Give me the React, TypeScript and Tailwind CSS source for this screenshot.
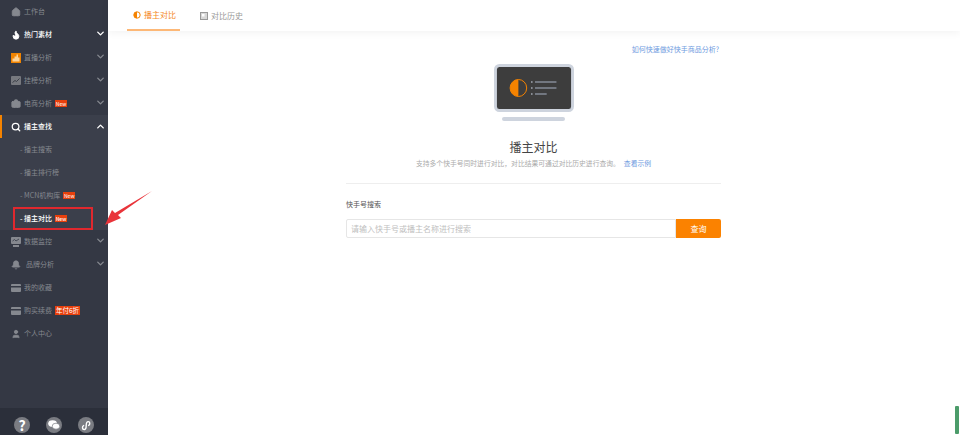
import { ChevronDown, ChevronUp, Search, Home, Flame, Briefcase, Bell, User } from 'lucide-react'
import type { ReactNode } from 'react'

const FONT = '"Noto Sans CJK SC", "Liberation Sans", sans-serif'

function NewBadge() {
  return <span className="ml-[3px] inline-flex h-[7px] w-[12px] items-center justify-center bg-[#e8400c] text-[5px] leading-none text-white">New</span>
}

function Row({ icon, label, chevron, tail, white, labelClass }: {
  icon: ReactNode
  label: string
  chevron?: boolean
  tail?: ReactNode
  white?: boolean
  labelClass?: string
}) {
  return (
    <div className={`flex h-[23px] items-center pl-[11px] pr-[2px] text-[7px] ${white ? 'font-medium text-white' : 'text-[#85888f]'}`}>
      <span className="mr-[3px] flex w-[10px] justify-center">{icon}</span>
      <span className={labelClass}>{label}</span>
      {tail}
      {chevron && <ChevronDown size={11} strokeWidth={3} className={`mb-[2px] ml-auto ${white ? 'text-white' : 'text-[#85888f]'}`} />}
    </div>
  )
}

function SubRow({ label, tail, active }: { label: string; tail?: ReactNode; active?: boolean }) {
  return (
    <div className={`flex h-[23px] items-center pl-[20px] text-[7px] ${active ? 'font-medium text-white' : 'text-[#85888f]'}`}>
      <span className="w-[4px]">-</span>{label}{tail}
    </div>
  )
}

// small grey card glyph used by 我的收藏 / 购买续费
function CardIcon() {
  return (
    <svg width="10" height="8" viewBox="0 0 10 8">
      <rect width="10" height="8" rx="1" fill="#85888f" />
      <rect y="2" width="10" height="1.5" fill="#343844" />
    </svg>
  )
}

function LiveIcon() {
  return (
    <svg width="10" height="10" viewBox="0 0 10 10">
      <rect width="10" height="10" fill="#f08300" />
      <path d="M1.5 8.5V5.5h2V3.5h2V1.5h1.5v3h1.5v4z" fill="#fcd49a" />
    </svg>
  )
}

function TrendIcon() {
  return (
    <svg width="10" height="9" viewBox="0 0 10 9">
      <rect width="10" height="9" rx="1" fill="#77797f" />
      <path d="M1.5 6.5 4 4.5l1.5 1L8.5 2.5" fill="none" stroke="#3c4049" />
    </svg>
  )
}

function MonitorIcon() {
  return (
    <svg width="10" height="10" viewBox="0 0 10 10">
      <rect width="10" height="7" rx="1" fill="#85888f" />
      <path d="M1.5 4 3.5 2.5l1.5 1.5L8 2" fill="none" stroke="#343844" strokeWidth=".8" />
      <rect x="2" y="8" width="6" height="2" fill="#85888f" />
    </svg>
  )
}

function WechatIcon() {
  return (
    <svg width="12" height="10" viewBox="0 0 12 10">
      <ellipse cx="4.6" cy="3.6" rx="4.4" ry="3.4" fill="#fff" />
      <ellipse cx="8" cy="6.2" rx="3.8" ry="3" fill="#fff" stroke="#7a7c82" strokeWidth=".7" />
    </svg>
  )
}

function LoopIcon() {
  return (
    <svg width="10" height="11" viewBox="0 0 10 11" fill="none" stroke="#fff" strokeWidth="1.4" strokeLinecap="round">
      <path d="M2.6 5.6C1 6.4 1 9.6 3.2 9.6c1.8 0 2-1.6 2-4s.4-4 2-4c2 0 2 2.8.5 3.8" />
    </svg>
  )
}

export default function App() {
  return (
    <div className="flex h-[435px] w-[960px] overflow-hidden bg-white" style={{ fontFamily: FONT }}>
      <aside className="relative flex w-[108px] shrink-0 flex-col bg-[#343844]">
        <div className="flex-1">
          <Row icon={<Home size={10} fill="#85888f" className="text-[#85888f]" />} label="工作台" />
          <Row white icon={<Flame size={10} fill="#fff" />} label="热门素材" chevron />
          <Row icon={<LiveIcon />} label="直播分析" chevron />
          <Row icon={<TrendIcon />} label="挂榜分析" chevron />
          <Row icon={<Briefcase size={10} fill="#85888f" className="text-[#85888f]" />} label="电商分析" chevron tail={<NewBadge />} />
          <div className="bg-[#3b3f4b]">
            <div className="relative">
              <span className="absolute left-0 top-0 h-[23px] w-[2px] bg-[#f58300]" />
              <div className="flex h-[23px] items-center pl-[11px] pr-[2px] text-[7px] font-medium text-white">
                <span className="mr-[3px] flex w-[10px] justify-center"><Search size={10} strokeWidth={3} /></span>
                <span>播主查找</span>
                <ChevronUp size={11} strokeWidth={3} className="ml-auto" />
              </div>
            </div>
            <SubRow label="播主搜索" />
            <SubRow label="播主排行榜" />
            <SubRow label="MCN机构库" tail={<NewBadge />} />
            <div className="ml-[13px] mr-[15px] h-[23px] border-2 border-[#e0282e]">
              <div className="-ml-[15px] -mt-[2px]"><SubRow active label="播主对比" tail={<NewBadge />} /></div>
            </div>
          </div>
          <Row icon={<MonitorIcon />} label="数据监控" chevron />
          <Row icon={<Bell size={10} fill="#85888f" className="text-[#85888f]" />} label="品牌分析" chevron labelClass="ml-[2px]" />
          <Row icon={<CardIcon />} label="我的收藏" />
          <Row
            icon={<CardIcon />}
            label="购买续费"
            tail={<span className="ml-[3px] bg-[#e8400c] px-[1px] text-[6.5px] leading-[9px] text-white">年付6折</span>}
          />
          <Row icon={<User size={10} fill="#85888f" className="text-[#85888f]" />} label="个人中心" />
        </div>
        <div className="flex h-[27px] justify-between bg-[#2b2f3a] px-[14px] pt-[9px]">
          <span className="flex h-[16px] w-[16px] items-center justify-center rounded-full bg-[#7a7c82] text-[14px] font-bold leading-none text-white">?</span>
          <span className="flex h-[16px] w-[16px] items-center justify-center rounded-full bg-[#7a7c82]"><WechatIcon /></span>
          <span className="flex h-[16px] w-[16px] items-center justify-center rounded-full bg-[#7a7c82]"><LoopIcon /></span>
        </div>
      </aside>

      <main className="relative flex-1 bg-white">
        <div className="flex h-[31px] items-stretch pl-[19px] shadow-[0_2px_8px_rgba(0,0,0,0.05)]">
          <div className="flex w-[53px] items-center justify-center gap-[3px] border-b-2 border-[#fdb877] pl-[2px] text-[8px] text-[#f58a1f]">
            <svg width="8" height="8" viewBox="0 0 8 8"><circle cx="4" cy="4" r="3.2" fill="none" stroke="#f58300" /><path d="M4 .8a3.2 3.2 0 0 0 0 6.4z" fill="#f58300" /></svg>
            播主对比
          </div>
          <div className="ml-[20px] flex items-center gap-[3px] text-[8px] text-[#999]">
            <svg width="8" height="8" viewBox="0 0 8 8"><rect x=".5" y=".5" width="7" height="7" fill="#d8d8d8" stroke="#999" /><rect x="2" y="2" width="2.5" height="2.5" fill="#fff" /></svg>
            对比历史
          </div>
        </div>

        <div className="flex w-[613px] justify-end pt-[13px] text-[7px] leading-[11px] text-[#6f9be0]">
          <span className="mr-[2px]">如何快速做好快手商品分析?</span>
        </div>

        <div className="ml-[238px] flex w-[375px] flex-col">
          <div className="flex flex-col items-center pt-[9px]">
            <svg width="80" height="48" viewBox="0 0 82 48" preserveAspectRatio="none">
              <rect x="1.5" y="1.5" width="79" height="45" rx="4" fill="#3d3d3d" stroke="#ced4de" strokeWidth="3" />
              <circle cx="25" cy="24" r="8.5" fill="#3d3d3d" stroke="#f58300" strokeWidth="1" />
              <path d="M25 15.5a8.5 8.5 0 0 0 0 17z" fill="#f58300" />
              <rect x="38" y="17" width="1.5" height="2" fill="#8f949c" />
              <rect x="38" y="23" width="1.5" height="2" fill="#8f949c" />
              <rect x="38" y="29" width="1.5" height="2" fill="#8f949c" />
              <rect x="42" y="17" width="22" height="2" fill="#727780" />
              <rect x="42" y="23" width="22" height="2" fill="#727780" />
              <rect x="42" y="29" width="12" height="2" fill="#727780" />
            </svg>
            <div className="mt-[5px] h-[4px] w-[63px] rounded-full bg-[#ced4de]" />
            <h1 className="mt-[17px] text-[12px] font-normal leading-[18px] text-[#444]">播主对比</h1>
            <p className="mt-[2px] text-[6.8px] leading-[11px] text-[#aaa]">
              支持多个快手号同时进行对比，对比结果可通过对比历史进行查询。
              <span className="ml-[4px] text-[#6f9be0]">查看示例</span>
            </p>
          </div>
          <div className="mt-[14px] border-t border-[#eee]" />
          <div className="mt-[14px] text-[7px] leading-[12px] text-[#555]">快手号搜索</div>
          <div className="mt-[9px] flex h-[19px]">
            <div className="flex flex-1 items-center rounded-l-[2px] border border-[#e6e6e6] pl-[4px] text-[8px] text-[#c0c0c0]">请输入快手号或播主名称进行搜索</div>
            <div className="flex w-[45px] items-center justify-center rounded-r-[2px] bg-[#fb8200] text-[8px] text-white">查询</div>
          </div>
        </div>

        <div className="absolute bottom-[1px] right-[1px] h-[28px] w-[4px] rounded-[1px] bg-[#4c9c6a]" />
      </main>

      <svg className="absolute left-[105px] top-[190px]" width="48" height="38" viewBox="0 0 48 38">
        <path d="M47 1 L13 25 L16 28 L0 35 L7 20 L10 23 Z" fill="#e9343a" />
      </svg>
    </div>
  )
}
